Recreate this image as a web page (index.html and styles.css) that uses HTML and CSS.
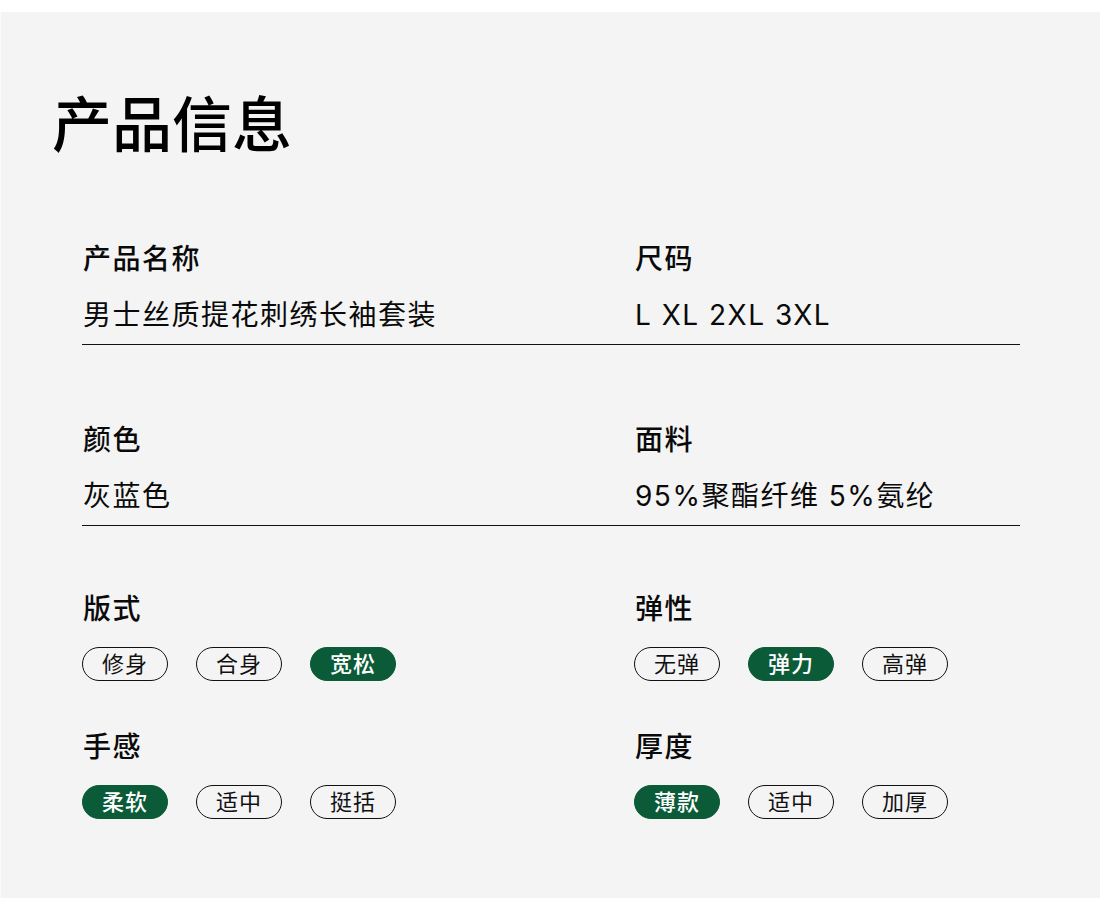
FILE: index.html
```html
<!DOCTYPE html>
<html lang="zh-CN">
<head>
<meta charset="utf-8">
<title>产品信息</title>
<link rel="stylesheet" href="styles.css">
</head>
<body>
<div class="page">
  <h1 class="title">产品信息</h1>
  <div class="content">
    <div class="row">
      <div class="cell">
        <div class="label">产品名称</div>
        <div class="value">男士丝质提花刺绣长袖套装</div>
      </div>
      <div class="cell">
        <div class="label">尺码</div>
        <div class="value">L XL 2XL 3XL</div>
      </div>
    </div>
    <div class="row row-second">
      <div class="cell">
        <div class="label">颜色</div>
        <div class="value">灰蓝色</div>
      </div>
      <div class="cell">
        <div class="label">面料</div>
        <div class="value">95%聚酯纤维 5%氨纶</div>
      </div>
    </div>
    <div class="tagrow tagrow-first">
      <div class="cell">
        <div class="label">版式</div>
        <div class="tags">
          <span class="tag">修身</span>
          <span class="tag">合身</span>
          <span class="tag active">宽松</span>
        </div>
      </div>
      <div class="cell">
        <div class="label">弹性</div>
        <div class="tags">
          <span class="tag">无弹</span>
          <span class="tag active">弹力</span>
          <span class="tag">高弹</span>
        </div>
      </div>
    </div>
    <div class="tagrow tagrow-second">
      <div class="cell">
        <div class="label">手感</div>
        <div class="tags">
          <span class="tag active">柔软</span>
          <span class="tag">适中</span>
          <span class="tag">挺括</span>
        </div>
      </div>
      <div class="cell">
        <div class="label">厚度</div>
        <div class="tags">
          <span class="tag active">薄款</span>
          <span class="tag">适中</span>
          <span class="tag">加厚</span>
        </div>
      </div>
    </div>
  </div>
</div>
</body>
</html>
```
FILE: styles.css
```css
html, body {
  margin: 0;
  padding: 0;
  background: #ffffff;
}
body {
  font-family: Inter, "Noto Sans CJK SC", sans-serif;
  color: #111111;
}
.page {
  margin-top: 12px;
  height: 886px;
  background: #f4f4f4;
  box-sizing: border-box;
  padding-top: 83px;
  border-left: 1px solid #fafafa;
}
.title {
  margin: 0 0 0 51px;
  font-size: 60px;
  line-height: 60px;
  font-weight: 500;
  letter-spacing: 0;
  color: #000;
}
.content {
  margin: 82px 0 0 81px;
  width: 938px;
}
.row,
.tagrow {
  display: grid;
  grid-template-columns: 552px 1fr;
}
.row {
  border-bottom: 1px solid #111;
  padding-bottom: 11px;
}
.row-second {
  margin-top: 73px;
}
.tagrow-first {
  margin-top: 61px;
}
.tagrow-second {
  margin-top: 44px;
}
.cell {
  display: flex;
  flex-direction: column;
}
.label {
  font-size: 28px;
  padding-top: 4px;
  line-height: 36px;
  font-weight: 500;
  letter-spacing: 1.5px;
  padding-left: 1px;
  color: #0a0a0a;
}
.value {
  margin-top: 16px;
  font-size: 28px;
  padding-top: 4px;
  line-height: 36px;
  font-weight: 400;
  letter-spacing: 1.5px;
  padding-left: 1px;
  color: #0a0a0a;
}
.tags {
  margin-top: 20px;
  display: flex;
  gap: 28px;
}
.tag {
  box-sizing: border-box;
  height: 34px;
  padding: 2px 19px 0;
  border: 1.5px solid #111;
  border-radius: 17px;
  font-size: 22px;
  line-height: 29px;
  letter-spacing: 1px;
  color: #111;
}
.tag.active {
  background: #0b5b38;
  border-color: #0b5b38;
  color: #ffffff;
  font-weight: 500;
}
```
